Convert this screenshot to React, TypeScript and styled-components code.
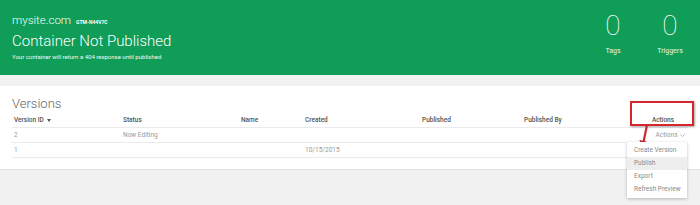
import React, { ReactElement } from 'react';
import styled, { createGlobalStyle } from 'styled-components';

const colors = {
  GREEN: '#0f9d58',
  PAGE: '#f1f1f1',
  LINE: '#ebebeb',
  HEAD_TEXT: '#555555',
  CELL_TEXT: '#9a9a9a',
  RED: '#d3262f',
};

const GlobalStyle = createGlobalStyle`
  html, body {
    margin: 0;
    padding: 0;
    background: ${colors.PAGE};
    font-family: Roboto, 'Liberation Sans', Arial, sans-serif;
  }
  * { box-sizing: border-box; }
`;

const Page = styled.div`
  width: 700px;
  height: 205px;
  background: ${colors.PAGE};
  position: relative;
  overflow: hidden;
`;

const Header = styled.header`
  height: 75px;
  background: ${colors.GREEN};
  color: #fff;
  display: flex;
  justify-content: space-between;
  padding: 0 14px 0 12px;
`;

const HeaderLeft = styled.div`
  display: flex;
  flex-direction: column;
  padding-top: 13px;
`;

const SiteRow = styled.div`
  display: flex;
  align-items: baseline;
  gap: 5px;
`;

const SiteName = styled.span`
  font-size: 11.5px;
  font-weight: 300;
  line-height: 14px;
`;

const ContainerId = styled.span`
  font-size: 5px;
  font-weight: 700;
`;

const Title = styled.h1`
  margin: 5px 0 0;
  font-size: 15px;
  font-weight: 300;
  line-height: 18px;
`;

const Subtitle = styled.div`
  font-size: 6px;
  line-height: 8px;
  margin-top: 3px;
  opacity: 0.95;
`;

const Stats = styled.div`
  display: flex;
  gap: 29px;
  padding-top: 10px;
`;

const Stat = styled.div`
  display: flex;
  flex-direction: column;
  align-items: center;
  width: ${(p: { $w: number }) => p.$w}px;
`;

const StatValue = styled.span`
  font-size: 28px;
  font-weight: 100;
  line-height: 32px;
`;

const StatLabel = styled.span`
  font-size: 7px;
  margin-top: 5px;
  opacity: 0.9;
`;

const Card = styled.section`
  margin-top: 11px;
  background: #fff;
  padding: 10px 12px 11px;
  box-shadow: 0 1px 1px rgba(0, 0, 0, 0.06);
`;

const CardTitle = styled.h2`
  margin: 0;
  font-size: 13px;
  font-weight: 300;
  color: #666;
  line-height: 15px;
`;

const Row = styled.div<{ $head?: boolean }>`
  display: grid;
  grid-template-columns: 109px 118px 64px 117px 102px 108px 1fr;
  align-items: center;
  height: ${(p) => (p.$head ? 17 : 15)}px;
  padding-top: ${(p) => (p.$head ? 2 : 0)}px;
  border-bottom: 1px solid ${colors.LINE};
  font-size: 6.5px;
  color: ${(p) => (p.$head ? colors.HEAD_TEXT : colors.CELL_TEXT)};
  font-weight: ${(p) => (p.$head ? 500 : 400)};
`;

const Cell = styled.div<{ $center?: boolean }>`
  padding-left: ${(p) => (p.$center ? 8 : 2)}px;
  display: flex;
  align-items: center;
  gap: 3px;
  justify-content: ${(p) => (p.$center ? 'center' : 'flex-start')};
`;

const SortCaret = styled.span`
  width: 0;
  height: 0;
  border-left: 2.5px solid transparent;
  border-right: 2.5px solid transparent;
  border-top: 3px solid ${colors.HEAD_TEXT};
`;

const ActionsToggle = styled.span`
  display: flex;
  align-items: center;
  gap: 2px;
  color: ${colors.CELL_TEXT};
  margin-left: 14px;
`;

const Highlight = styled.div`
  position: absolute;
  left: 630px;
  top: 101px;
  width: 64px;
  height: 25px;
  border: 2px solid ${colors.RED};
  box-shadow: 1px 1px 2px rgba(0, 0, 0, 0.35);
  pointer-events: none;
`;

const Arrow = styled.svg`
  position: absolute;
  left: 636px;
  top: 124px;
  overflow: visible;
`;

const Menu = styled.ul`
  position: absolute;
  left: 627px;
  top: 142px;
  width: 60px;
  margin: 0;
  padding: 2px 0;
  list-style: none;
  background: #fff;
  box-shadow: 0 1px 3px rgba(0, 0, 0, 0.25);
`;

const MenuItem = styled.li<{ $active?: boolean }>`
  height: 13px;
  line-height: 13px;
  padding-left: 7px;
  font-size: 6.5px;
  color: #8a8a8a;
  background: ${(p) => (p.$active ? '#eeeeee' : 'transparent')};
  white-space: nowrap;
`;

const versions = [
  { id: '2', status: 'Now Editing', name: '', created: '', published: '', by: '', actions: true },
  { id: '1', status: '', name: '', created: '10/15/2015', published: '', by: '', actions: false },
];

const App = (): ReactElement => {
  return (
    <Page>
      <GlobalStyle />
      <Header>
        <HeaderLeft>
          <SiteRow>
            <SiteName>mysite.com</SiteName>
            <ContainerId>GTM-N44V7C</ContainerId>
          </SiteRow>
          <Title>Container Not Published</Title>
          <Subtitle>Your container will return a 404 response until published</Subtitle>
        </HeaderLeft>
        <Stats>
          <Stat $w={24}>
            <StatValue>0</StatValue>
            <StatLabel>Tags</StatLabel>
          </Stat>
          <Stat $w={32}>
            <StatValue>0</StatValue>
            <StatLabel>Triggers</StatLabel>
          </Stat>
        </Stats>
      </Header>

      <Card>
        <CardTitle>Versions</CardTitle>
        <Row $head>
          <Cell>
            Version ID <SortCaret />
          </Cell>
          <Cell>Status</Cell>
          <Cell>Name</Cell>
          <Cell>Created</Cell>
          <Cell>Published</Cell>
          <Cell>Published By</Cell>
          <Cell $center>Actions</Cell>
        </Row>
        {versions.map((v) => (
          <Row key={v.id}>
            <Cell>{v.id}</Cell>
            <Cell>{v.status}</Cell>
            <Cell>{v.name}</Cell>
            <Cell>{v.created}</Cell>
            <Cell>{v.published}</Cell>
            <Cell>{v.by}</Cell>
            <Cell $center>
              {v.actions && (
                <ActionsToggle>
                  Actions
                  <svg width="5" height="3" viewBox="0 0 5 3">
                    <path d="M0.5 0.5 L2.5 2.5 L4.5 0.5" fill="none" stroke="#9a9a9a" strokeWidth="0.7" />
                  </svg>
                </ActionsToggle>
              )}
            </Cell>
          </Row>
        ))}
      </Card>

      <Highlight />
      <Arrow width="14" height="26" viewBox="0 0 14 26">
        <line x1="11" y1="1" x2="7.5" y2="18" stroke={colors.RED} strokeWidth="2.2" />
        <polygon points="6,25 3.5,16 10.5,17.5" fill={colors.RED} />
      </Arrow>

      <Menu>
        <MenuItem>Create Version</MenuItem>
        <MenuItem $active>Publish</MenuItem>
        <MenuItem>Export</MenuItem>
        <MenuItem>Refresh Preview</MenuItem>
      </Menu>
    </Page>
  );
};

export default App;
